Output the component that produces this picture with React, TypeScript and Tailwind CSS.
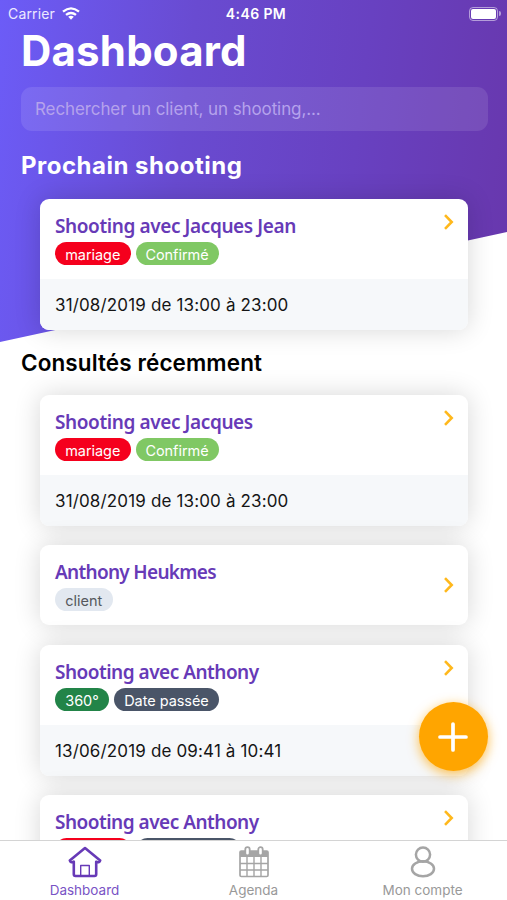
import type { ReactNode } from "react";

function Chevron() {
  return (
    <svg width="12" height="18" viewBox="0 0 12 18" fill="none" stroke="#ffb81c" strokeWidth="2.6">
      <path d="M2 2.2 8.7 9 2 15.8" />
    </svg>
  );
}

function Badge({ color, width, children }: { color: string; width: string; children: ReactNode }) {
  return (
    <span className={`flex h-[23px] items-center justify-center rounded-full pt-[2px] text-[14.5px] tracking-[-0.05px] whitespace-nowrap ${color} ${width}`}>
      {children}
    </span>
  );
}

function Card({ title, titleClass, badges, date }: { title: string; titleClass: string; badges: ReactNode; date?: string }) {
  return (
    <article className="mx-[19px] overflow-hidden rounded-[9px] bg-white shadow-[0_0_27px_rgba(0,0,0,0.16)]">
      <div className="flex h-20 justify-between pr-[13px] pl-[15px]">
        <div className="pt-[13px]">
          <h3 className={`h-[30px] font-['Noto_Sans',sans-serif] text-[19px] leading-[28px] font-semibold whitespace-nowrap text-[#673ab7] ${titleClass}`}>
            {title}
          </h3>
          <div className="flex gap-[5px]">{badges}</div>
        </div>
        <div className={date ? "pt-[14px]" : "self-center"}>
          <Chevron />
        </div>
      </div>
      {date && (
        <div className="flex h-[51px] items-center bg-[#f6f8fa] pt-[2px] pl-[15px] text-[17px] tracking-[0.15px] text-[#151515]">{date}</div>
      )}
    </article>
  );
}

function HomeIcon() {
  return (
    <svg width="34" height="32" viewBox="0 0 34 32" fill="none" stroke="#673ab7" strokeWidth="2.6" strokeLinejoin="round">
      <path d="M17 2 1.800 14.400c.5 2 2.200 2.300 4 1.300v12.600c0 1 .7 1.700 1.700 1.700h19c1 0 1.700-.7 1.700-1.700V15.700c1.800 1 3.500.7 4-1.300Z" />
      <path d="M12.700 29.800V19.500h8.600v10.300" strokeWidth="1.400" />
    </svg>
  );
}

function CalendarIcon() {
  return (
    <svg width="30" height="32" viewBox="0 0 30 32" fill="none" stroke="#a5a5a5">
      <rect x="1" y="5" width="28" height="25.500" rx="1.300" strokeWidth="1.700" />
      <path d="M1 5h28v6H1z" fill="#a5a5a5" stroke="none" />
      <path d="M1 17.500h28M1 24h28M8 11v19M15 11v19M22 11v19" strokeWidth="1.400" />
      <g fill="white" strokeWidth="1.800">
        <rect x="6.300" y="1.200" width="4.400" height="8.300" rx="2.200" />
        <rect x="19.300" y="1.200" width="4.400" height="8.300" rx="2.200" />
      </g>
    </svg>
  );
}

function AccountIcon() {
  return (
    <svg width="26" height="32" viewBox="0 0 26 32" fill="none" stroke="#a5a5a5" strokeWidth="2.500">
      <circle cx="13" cy="8.600" r="7.100" />
      <ellipse cx="13" cy="22.800" rx="11" ry="7.500" />
    </svg>
  );
}

const married = <Badge color="bg-[#f5001d] text-white" width="w-[75.5px]">mariage</Badge>;
const confirmed = <Badge color="bg-[#80c864] text-white" width="w-[83px]">Confirmé</Badge>;
const past = <Badge color="bg-[#4a5568] text-white" width="w-[105px]">Date passée</Badge>;

export default function App() {
  return (
    <div className="relative flex h-[900px] w-[507px] flex-col overflow-hidden bg-white font-['Inter',sans-serif]">
      <div className="absolute inset-x-0 top-0 h-[342px] bg-[linear-gradient(97deg,#6c5cf7_0%,#694bd1_36%,#6841c1_68%,#6837ac_100%)] [clip-path:polygon(0_0,100%_0,100%_232px,0_100%)]" />

      <header className="relative flex h-[27px] shrink-0 items-center justify-between pr-[6px] pl-[8px] text-[14px] text-white">
        <div className="flex w-[100px] items-center gap-[7px] text-[#ece8ff]">
          <span className="tracking-[0.15px]">Carrier</span>
          <svg width="18" height="13" viewBox="0 0 18 13" fill="none" stroke="white" strokeWidth="2.300">
            <path d="M1 4.700Q9-2 17 4.700M4 7.900q5-3.900 10 0" />
            <path d="m9 12.700-2.800-2.900q2.800-2 5.600 0Z" fill="white" stroke="none" />
          </svg>
        </div>
        <span className="pl-[3px] font-semibold tracking-[0.4px]">4:46 PM</span>
        <div className="flex w-[100px] items-center justify-end gap-px">
          <div className="h-[14px] w-[29px] rounded-[4px] border border-white/50 p-px">
            <div className="h-full rounded-[2px] bg-white" />
          </div>
          <div className="h-[5px] w-[2px] rounded-r-full bg-white/50" />
        </div>
      </header>

      <main className="relative min-h-0 flex-1 overflow-hidden px-[20px] pl-[21px]">
        <h1 className="h-[60px] text-[42px] leading-[48px] font-bold tracking-[0.2px] text-white">Dashboard</h1>
        <div className="flex h-[44px] w-[467px] items-center rounded-[11px] bg-white/10 pt-px pl-[14px] text-[17px] tracking-[-0.1px] text-[#b5a2ec]">
          Rechercher un client, un shooting,...
        </div>
        <h2 className="flex h-[68px] items-center pt-[2px] text-[24px] font-bold tracking-[0.5px] text-white">Prochain shooting</h2>
        <Card title="Shooting avec Jacques Jean" titleClass="tracking-[-0.4px]" badges={<>{married}{confirmed}</>} date="31/08/2019 de 13:00 à 23:00" />
        <h2 className="flex h-[65px] items-center text-[22.500px] font-semibold tracking-[0.1px] text-black">Consultés récemment</h2>
        <div className="flex flex-col gap-[19px]">
          <Card title="Shooting avec Jacques" titleClass="tracking-[-0.4px]" badges={<>{married}{confirmed}</>} date="31/08/2019 de 13:00 à 23:00" />
          <div className="pb-px">
            <Card title="Anthony Heukmes" titleClass="tracking-[-0.7px]" badges={<Badge color="bg-[#e2e8f0] text-[#55585d]" width="w-[57.5px]">client</Badge>} />
          </div>
          <Card title="Shooting avec Anthony" titleClass="tracking-[-0.5px]" badges={<><Badge color="bg-[#228448] text-white" width="w-[54px]">360°</Badge>{past}</>} date="13/06/2019 de 09:41 à 10:41" />
          <Card title="Shooting avec Anthony" titleClass="tracking-[-0.5px]" badges={<>{married}{past}</>} date="13/06/2019 de 09:41 à 10:41" />
        </div>
      </main>

      <button className="absolute top-[702px] left-[418.5px] flex size-[69px] items-center justify-center rounded-full bg-[#ffa500] shadow-[0_3px_12px_rgba(255,165,0,0.7)]">
        <svg width="30" height="30" viewBox="0 0 30 30" stroke="white" strokeWidth="3.700" strokeLinecap="round">
          <path d="M15 2v26M2 15h26" />
        </svg>
      </button>

      <nav className="relative grid h-[60px] shrink-0 grid-cols-3 border-t border-[#d4d4d4] bg-white text-[13.500px] text-[#999999]">
        <a className="flex flex-col items-center gap-[3px] pt-[5px] text-[#7953c5]"><HomeIcon /><span className="leading-[18px]">Dashboard</span></a>
        <a className="flex flex-col items-center gap-[3px] pt-[5px]"><CalendarIcon /><span className="leading-[18px]">Agenda</span></a>
        <a className="flex flex-col items-center gap-[3px] pt-[5px]"><AccountIcon /><span className="leading-[18px]">Mon compte</span></a>
      </nav>
    </div>
  );
}
